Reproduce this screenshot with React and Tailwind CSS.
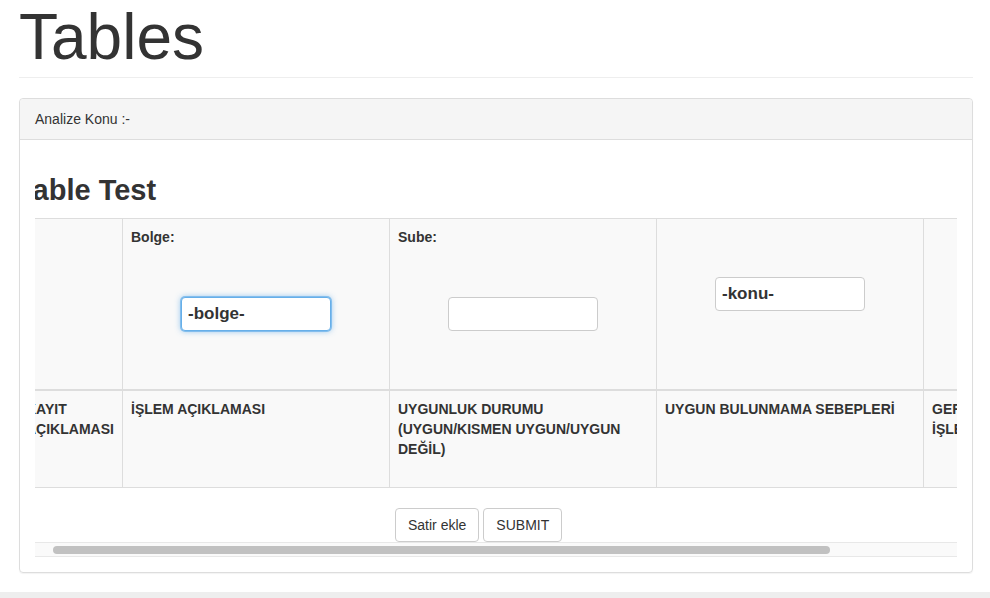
import { useLayoutEffect, useRef } from 'react';

const FONT = { fontFamily: '"Liberation Sans", Arial, Helvetica, sans-serif' };

function FilterCell({ label, value, focused }) {
  return (
    <div className="bg-[#f9f9f9] border-b-2 border-r border-[#ddd] p-2">
      {label && <div className="h-5 leading-5 font-bold">{label}</div>}
      <div className={`flex justify-center ${label ? 'my-[50px]' : 'mt-[50px]'}`}>
        <input
          readOnly
          value={value}
          className={`w-[150px] h-[34px] rounded px-[6px] bg-white text-[17px] font-bold text-[#333] outline-none ${
            focused
              ? 'border border-[#66afe9] shadow-[0_0_0_1px_rgba(102,175,233,0.7),0_0_6px_rgba(102,175,233,0.8)]'
              : 'border border-[#ccc]'
          }`}
        />
      </div>
    </div>
  );
}

function HeadCell({ children, last }) {
  return (
    <div className={`bg-[#f9f9f9] border-b border-[#ddd] p-2 min-h-[97px] font-bold leading-5 ${last ? '' : 'border-r'}`}>
      {children}
    </div>
  );
}

export default function App() {
  const scrollRef = useRef(null);

  useLayoutEffect(() => {
    if (scrollRef.current) scrollRef.current.scrollLeft = 18;
  }, []);

  return (
    <div className="min-h-[598px] bg-white text-[#333] text-sm flex flex-col" style={FONT}>
      <div className="pl-[19px] pr-[17px] flex-1">
        {/* Page title */}
        <h1 className="text-[64px] leading-[70px] pt-[2px] pb-[5px] border-b border-[#eee] text-[#333]">Tables</h1>

        {/* Panel */}
        <div className="mt-5 border border-[#ddd] rounded shadow-[0_1px_1px_rgba(0,0,0,0.05)]">
          <div className="bg-[#f5f5f5] border-b border-[#ddd] rounded-t px-[15px] py-[10px] leading-5">
            Analize Konu :-
          </div>
          <div className="p-[15px]">
            <div ref={scrollRef} className="overflow-x-hidden">
              <div className="w-max">
                <h3 className="text-[29px] font-bold leading-[31px] mt-5 mb-[12px]">Table Test</h3>

                <div className="grid grid-cols-[105px_267px_267px_267px_200px] border-t border-l border-[#ddd]">
                  <div className="bg-[#f9f9f9] border-b-2 border-r border-[#ddd]" />
                  <FilterCell label="Bolge:" value="-bolge-" focused />
                  <FilterCell label="Sube:" value="" />
                  <FilterCell value="-konu-" />
                  <div className="bg-[#f9f9f9] border-b-2 border-[#ddd]" />

                  <HeadCell>KAYIT AÇIKLAMASI</HeadCell>
                  <HeadCell>İŞLEM AÇIKLAMASI</HeadCell>
                  <HeadCell>UYGUNLUK DURUMU (UYGUN/KISMEN UYGUN/UYGUN DEĞİL)</HeadCell>
                  <HeadCell>UYGUN BULUNMAMA SEBEPLERİ</HeadCell>
                  <HeadCell last>
                    GERİ BİLDİRİM
                    <br />
                    İŞLEMLERİ
                  </HeadCell>
                </div>

                <div className="pt-5 pl-[378px] flex gap-1">
                  <button className="h-[34px] px-3 border border-[#ccc] rounded bg-white text-[#333] text-sm">Satir ekle</button>
                  <button className="h-[34px] px-3 border border-[#ccc] rounded bg-white text-[#333] text-sm">SUBMIT</button>
                </div>
              </div>
            </div>

            {/* Scrollbar */}
            <div className="h-[15px] bg-[#fafafa] border-t border-b border-[#e8e8e8] flex items-center pl-[18px] pr-[127px]">
              <div className="h-2 flex-1 rounded-full bg-[#c1c1c1]" />
            </div>
          </div>
        </div>
      </div>
      <div className="h-[6px] mt-[19px] bg-[#eee]" />
    </div>
  );
}
